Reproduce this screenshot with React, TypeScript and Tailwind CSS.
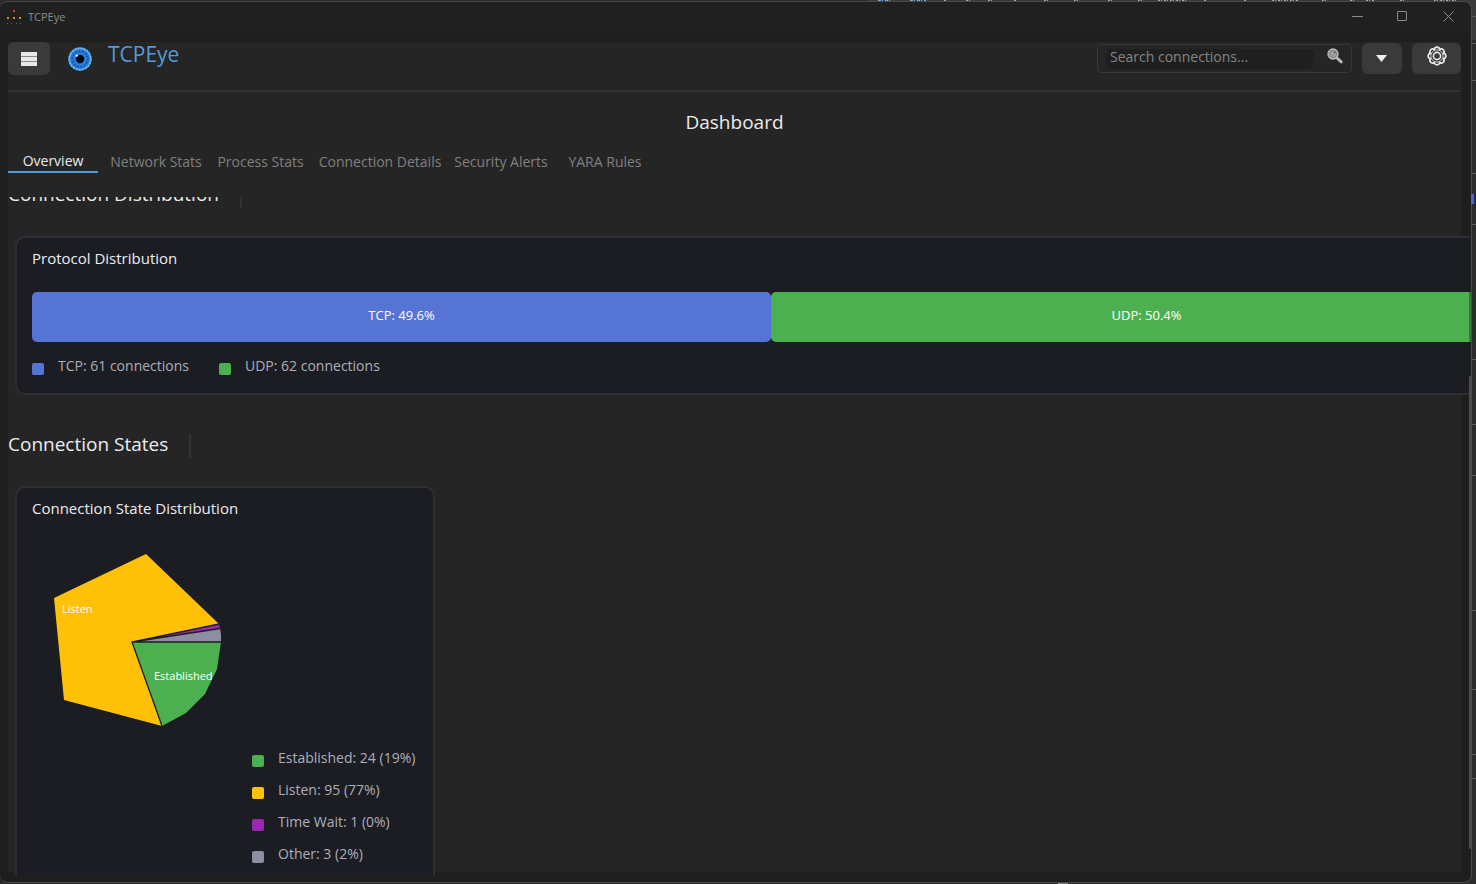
import { useState } from 'react';

const TABS = [
  { name: 'Overview', width: 'w-[90px]' },
  { name: 'Network Stats', width: 'w-[108px]' },
  { name: 'Process Stats', width: 'w-[93px]' },
  { name: 'Connection Details', width: 'w-[138px]' },
  { name: 'Security Alerts', width: 'w-24' },
  { name: 'YARA Rules', width: 'w-[104px]' },
];

const PROTOCOLS = [
  { name: 'TCP', count: 61, percent: 49.6, color: 'bg-[#5674d3]' },
  { name: 'UDP', count: 62, percent: 50.4, color: 'bg-[#4cb050]' },
];

const STATES = [
  { name: 'Established', count: 24, percent: 19, color: 'bg-[#4cb050]' },
  { name: 'Listen', count: 95, percent: 77, color: 'bg-[#ffc108]' },
  { name: 'Time Wait', count: 1, percent: 0, color: 'bg-[#9c27b0]' },
  { name: 'Other', count: 3, percent: 2, color: 'bg-[#8e8ea2]' },
];

// Rows of the window behind, visible along the right edge
const EDGE_LINES = [16, 43, 80, 173, 224, 359, 424, 475, 610, 689, 754, 778];

function AppDots() {
  return (
    <svg width="16" height="16" viewBox="0 0 16 16" shapeRendering="crispEdges" aria-hidden="true">
      <rect x="7" y="1" width="2" height="2" fill="#cc4036" />
      <g fill="#d08c2c">
        <rect x="1" y="8" width="2" height="2" />
        <rect x="7" y="8" width="2" height="2" />
        <rect x="13" y="8" width="2" height="2" />
      </g>
      <g fill="#2b6f93">
        <rect x="1" y="14" width="1" height="1" />
        <rect x="5" y="14" width="1" height="1" />
        <rect x="10" y="14" width="1" height="1" />
        <rect x="14" y="14" width="1" height="1" />
      </g>
    </svg>
  );
}

function EyeLogo() {
  return (
    <svg width="24" height="24" viewBox="0 0 24 24" aria-hidden="true">
      <circle cx="12" cy="12" r="11.8" fill="#3f93dc" />
      <circle cx="12" cy="12" r="10.8" fill="none" stroke="#7fc0ee" strokeWidth="1.2" strokeDasharray="2 1.2" />
      <circle cx="12" cy="12" r="9.4" fill="#2375d2" />
      <circle cx="12" cy="12" r="7.8" fill="none" stroke="#1553a8" strokeWidth="1.8" strokeDasharray="1.5 2" />
      <circle cx="12" cy="12" r="5.6" fill="none" stroke="#2f86dc" strokeWidth="1.4" strokeDasharray="2 1" />
      <circle cx="12" cy="12" r="4.2" fill="#020a18" />
      <circle cx="8.8" cy="8.6" r="1.2" fill="#e8f6ff" />
    </svg>
  );
}

function MagnifierIcon() {
  return (
    <svg width="16" height="16" viewBox="0 0 16 16" aria-hidden="true">
      <path d="M9.5 9.5l4.7 4.3" stroke="#b9b9b9" strokeWidth="3" strokeLinecap="round" />
      <circle cx="6" cy="6" r="5" fill="#9c9c9c" stroke="#bdbdbd" strokeWidth="1.3" />
      <circle cx="6" cy="6" r="3.8" fill="none" stroke="#7c7c7c" strokeWidth="0.7" />
      <circle cx="7.8" cy="4.4" r="0.7" fill="#333333" />
    </svg>
  );
}

function GearIcon() {
  const teeth = [0, 45, 90, 135, 180, 225, 270, 315];
  return (
    <svg width="20" height="20" viewBox="0 0 20 20" fill="none" stroke="#e6e6e6" aria-hidden="true">
      {teeth.map((angle) => (
        <path
          key={angle}
          d="M7.3 3.5C7.7 0.4 12.3 0.4 12.7 3.5"
          strokeWidth="1.7"
          strokeLinecap="round"
          transform={`rotate(${angle} 10 10)`}
        />
      ))}
      <circle cx="10" cy="10" r="6.1" strokeWidth="0.8" />
      <circle cx="10" cy="10" r="3.6" strokeWidth="1.6" />
    </svg>
  );
}

function StateChart() {
  return (
    <svg
      width="190"
      height="190"
      viewBox="40 545 190 190"
      className="block"
      role="img"
      aria-label="Connection states"
    >
      <path d="M132 642L162 726L64 700L54 598L146 554L219 624Z" fill="#ffc108" />
      <path d="M132 642L219 624L220 628Z" fill="#9c27b0" />
      <path d="M132 642L220 628L221 635L221 642Z" fill="#8e8ea2" />
      <path d="M132 642H221L217 669L205 694L186 713L162 726Z" fill="#4cb050" />
      <path
        d="M162 726L132 642L219 624M132 642L220 628.500M132 642H222"
        stroke="#1c1d22"
        strokeWidth="1.3"
        fill="none"
      />
      <g fill="#ffffff" fontSize="11">
        <text x="62" y="613">Listen</text>
        <text x="154" y="680">Established</text>
      </g>
    </svg>
  );
}

function SectionHeading({ children }: { children: string }) {
  return (
    <div className="flex h-6 items-start gap-[21px]">
      <h2 className="text-[19px] leading-5 text-[#ececf2]">{children}</h2>
      <span className="h-6 w-[2px] bg-[#333333]" />
    </div>
  );
}

function Legend({ color, children }: { color: string; children: string }) {
  return (
    <li className="flex h-5 items-end gap-[14px] text-sm text-[#aeaeba]">
      <span className={`h-3 w-3 rounded-[2px] ${color}`} />
      <span className="self-start leading-[22px]">{children}</span>
    </li>
  );
}

export default function App() {
  const [tab, setTab] = useState('Overview');
  const [search, setSearch] = useState('');

  return (
    <div className="relative h-screen overflow-hidden bg-[#2b2b2b] pt-px pr-1 pb-px font-['Open_Sans','Noto_Sans',sans-serif]">
      {/* Window behind */}
      <span className="absolute top-0 right-0 h-10 w-[608px] bg-[#3a3a3a]" />
      {EDGE_LINES.map((y) => (
        <span key={y} className="absolute right-0 h-px w-1 bg-[#5c5c5c]" style={{ top: y }} />
      ))}

      <div className="relative flex h-full flex-col overflow-hidden rounded-lg border-y border-r border-[#4a4a4a] bg-[#1e1e1e]">
        {/* Title bar */}
        <div className="flex h-[30px] shrink-0 items-center bg-[#202020] pl-[6px] text-[#8b8b8b]">
          <AppDots />
          <span className="ml-[6px] text-[11px]">TCPEye</span>
          <div className="ml-auto flex items-center pb-px">
            <button aria-label="Minimize" className="flex h-7 w-[45px] items-center justify-center">
              <svg width="11" height="11" stroke="#8b8b8b"><path d="M0 5.500H11" /></svg>
            </button>
            <button aria-label="Maximize" className="flex h-7 w-[45px] items-center justify-center">
              <svg width="11" height="11" fill="none" stroke="#8b8b8b"><rect x="0.5" y="0.5" width="9" height="9" rx="0.5" /></svg>
            </button>
            <button aria-label="Close" className="flex h-7 w-[46px] items-center justify-center">
              <svg width="11" height="11" stroke="#8b8b8b"><path d="M0.5 0.5L10.500 10.500M10.500 0.5L0.5 10.500" /></svg>
            </button>
          </div>
        </div>

        <main className="mt-[10px] mr-[10px] mb-[10px] ml-2 flex min-h-0 flex-1 flex-col bg-[#252525]">
          <header className="flex h-[50px] shrink-0 items-start border-b-2 border-[#323232]">
            <button aria-label="Menu" className="flex h-[33px] w-[42px] items-center justify-center rounded-md bg-[#3a3a3a]">
              <svg width="16" height="14" fill="#e8e8e8">
                <rect width="16" height="14" fill="#8a8a8a" />
                <rect width="16" height="4" />
                <rect y="5" width="16" height="4" />
                <rect y="10" width="16" height="4" />
              </svg>
            </button>
            <div className="ml-[18px] flex h-[33px] items-center">
              <EyeLogo />
            </div>
            <h1 className="ml-4 text-[21px] leading-6 text-[#559bd8]">TCPEye</h1>

            <div className="ml-auto flex items-center gap-[10px] pt-px">
              <div className="flex h-[29px] w-[255px] items-center rounded border border-[#383838] pr-2 pl-2">
                <input
                  aria-label="Search connections"
                  value={search}
                  onChange={(e) => setSearch(e.target.value)}
                  placeholder="Search connections..."
                  className="h-5 w-[208px] rounded-md bg-[#1f1f1f] px-1 pb-1 text-sm text-[#e0e0e0] placeholder:text-[#858585]"
                />
                <button aria-label="Search" className="mb-[6px] ml-auto">
                  <MagnifierIcon />
                </button>
              </div>
              <button aria-label="Filters" className="flex h-[31px] w-10 items-center justify-center rounded-md bg-[#3a3a3a]">
                <svg width="12" height="7" fill="#f0f0f0"><path d="M0 0H11L5.500 7Z" /></svg>
              </button>
              <button aria-label="Settings" className="flex h-[31px] w-[49px] justify-center rounded-md bg-[#3a3a3a] pt-[3px]">
                <GearIcon />
              </button>
            </div>
          </header>

          <h2 className="mt-[18px] shrink-0 text-center text-[19px] leading-6 text-[#ececec]">Dashboard</h2>

          <nav className="mt-4 flex shrink-0 gap-1">
            {TABS.map((t) => (
              <button
                key={t.name}
                onClick={() => setTab(t.name)}
                className={`h-[23px] text-sm whitespace-nowrap ${t.width} ${
                  tab === t.name
                    ? 'border-b-2 border-[#559bd8] leading-5 text-[#ececec]'
                    : 'leading-[23px] text-[#808080]'
                }`}
              >
                {t.name}
              </button>
            ))}
          </nav>

          {/* Scroll area, runs past the panel on the right and bottom */}
          <div className="relative mt-6 -mr-[10px] -mb-[3px] min-h-0 flex-1 overflow-hidden">
            <div className="-mt-[13px]">
              <SectionHeading>Connection Distribution</SectionHeading>
            </div>

            <section className="mt-7 ml-[7px] w-[calc(100%+61px)] rounded-[10px] border-2 border-[#2e2e34] bg-[#1c1d22] px-[15px] pt-[10px] pb-[18px]">
              <h3 className="text-[15px] leading-5 text-[#ececf2]">Protocol Distribution</h3>
              <div className="mt-6 flex h-[50px]">
                {PROTOCOLS.map((p) => (
                  <div
                    key={p.name}
                    className={`flex items-center justify-center rounded-[5px] pb-[2px] text-[13px] text-white ${p.color}`}
                    style={{ width: `${p.percent}%` }}
                  >
                    {p.name}: {p.percent}%
                  </div>
                ))}
              </div>
              <ul className="mt-[13px] flex gap-[30px]">
                {PROTOCOLS.map((p) => (
                  <Legend key={p.name} color={p.color}>{`${p.name}: ${p.count} connections`}</Legend>
                ))}
              </ul>
            </section>

            <div className="mt-[39px]">
              <SectionHeading>Connection States</SectionHeading>
            </div>

            <section className="mt-7 ml-[7px] w-[420px] rounded-[10px] border-2 border-[#2e2e34] bg-[#1c1d22] px-[15px] pt-[10px] pb-[18px]">
              <h3 className="text-[15px] leading-5 text-[#ececf2]">Connection State Distribution</h3>
              <div className="mt-[27px] ml-2">
                <StateChart />
              </div>
              <ul className="mt-3 ml-[220px] flex flex-col gap-3">
                {STATES.map((s) => (
                  <Legend key={s.name} color={s.color}>{`${s.name}: ${s.count} (${s.percent}%)`}</Legend>
                ))}
              </ul>
            </section>

            <div className="absolute inset-y-0 right-0 w-[2px] bg-[#1e1e1e]/40 pt-[179px] pb-[26px]">
              <div className="h-full rounded-full bg-[#4d4d4d]" />
            </div>
          </div>
        </main>
      </div>

      {/* Slivers of the window behind */}
      <svg className="absolute top-0 right-0" width="608" height="2" aria-hidden="true">
        <path d="M10 0.500H24M42 0.500H58" stroke="#7fa6d8" strokeDasharray="3 1 1 2" />
        <path
          d="M76 0.500H78M98 0.500H102M120 0.500H124M146 0.500H148M176 0.500H182M206 0.500H212M240 0.500H246M270 0.500H276M290 0.500H320M336 0.500H338M376 0.500H378M404 0.500H430M454 0.500H460M482 0.500H486M498 0.500H506M532 0.500H536M566 0.500H590"
          stroke="#a8a39b"
          strokeDasharray="2 1 1 2"
        />
      </svg>
      <span className="absolute top-[194px] right-[2px] h-[10px] w-[3px] bg-[#4a63e0]" />
      <span className="absolute right-[408px] bottom-0 h-px w-[10px] bg-[#808080]" />
    </div>
  );
}
